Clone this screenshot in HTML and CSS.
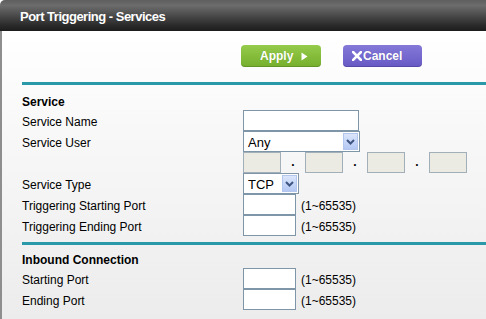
FILE: index.html
```html
<!DOCTYPE html>
<html>
<head>
<meta charset="utf-8">
<title>Port Triggering - Services</title>
<link rel="stylesheet" href="styles.css">
</head>
<body>
<div class="page">
  <div class="header"><h1 class="title">Port Triggering - Services</h1></div>
  <div class="main">
    <div class="actions">
      <button class="btn btn-apply"><span>Apply</span><svg class="tri" width="7" height="9" viewBox="0 0 7 9"><path d="M0.5 0.5 L6.5 4.5 L0.5 8.5 Z" fill="#fff"/></svg></button>
      <button class="btn btn-cancel"><svg class="xicon" width="10" height="10" viewBox="0 0 10 10"><path d="M1 1 L9 9 M9 1 L1 9" stroke="#fff" stroke-width="2.6" stroke-linecap="square"/></svg><span>Cancel</span></button>
    </div>
    <div class="rule rule-top"></div>
    <div class="section">
      <div class="heading">Service</div>
      <div class="row">
        <div class="label">Service Name</div>
        <div class="field"><input class="text w-name" type="text"></div>
      </div>
      <div class="row">
        <div class="label">Service User</div>
        <div class="field">
          <div class="select w-user"><span class="sel-text">Any</span><span class="sel-arrow"><svg width="9" height="6" viewBox="0 0 9 6"><path d="M1 1 L4.5 4.5 L8 1" fill="none" stroke="#3f5683" stroke-width="2"/></svg></span></div>
        </div>
      </div>
      <div class="row">
        <div class="label"></div>
        <div class="field">
          <input class="text ip" type="text" disabled><span class="dot">.</span><input class="text ip" type="text" disabled><span class="dot">.</span><input class="text ip" type="text" disabled><span class="dot">.</span><input class="text ip" type="text" disabled>
        </div>
      </div>
      <div class="row">
        <div class="label">Service Type</div>
        <div class="field">
          <div class="select w-type"><span class="sel-text">TCP</span><span class="sel-arrow"><svg width="9" height="6" viewBox="0 0 9 6"><path d="M1 1 L4.5 4.5 L8 1" fill="none" stroke="#3f5683" stroke-width="2"/></svg></span></div>
        </div>
      </div>
      <div class="row">
        <div class="label">Triggering Starting Port</div>
        <div class="field"><input class="text w-port" type="text"><span class="hint">(1~65535)</span></div>
      </div>
      <div class="row">
        <div class="label">Triggering Ending Port</div>
        <div class="field"><input class="text w-port" type="text"><span class="hint">(1~65535)</span></div>
      </div>
    </div>
    <div class="rule rule-mid"></div>
    <div class="section">
      <div class="heading heading-inbound">Inbound Connection</div>
      <div class="row">
        <div class="label">Starting Port</div>
        <div class="field"><input class="text w-port" type="text"><span class="hint">(1~65535)</span></div>
      </div>
      <div class="row">
        <div class="label">Ending Port</div>
        <div class="field"><input class="text w-port" type="text"><span class="hint">(1~65535)</span></div>
      </div>
    </div>
  </div>
</div>
</body>
</html>
```

FILE: styles.css
```css
html, body {
  margin: 0;
  padding: 0;
}

body {
  font-family: "Liberation Sans", Arial, sans-serif;
  font-size: 12px;
  color: #000;
  background: #fff;
}

.page {
  width: 486px;
  height: 319px;
  overflow: hidden;
  display: flex;
  flex-direction: column;
}

.header {
  flex: 0 0 31px;
  box-sizing: border-box;
  padding-left: 20px;
  display: flex;
  align-items: center;
  border-top-left-radius: 5px;
  background: linear-gradient(#5e5e5e 0%, #6c6c6c 18%, #4a4a4a 50%, #2c2c2c 80%, #1c1c1c 100%);
}

.title {
  margin: 0;
  color: #fff;
  font-size: 13px;
  font-weight: bold;
  letter-spacing: -0.5px;
  line-height: 15px;
  padding-top: 1px;
}

.main {
  flex: 1;
  border-left: 2px solid #8e8e8e;
  padding-left: 20px;
  background: linear-gradient(#ffffff 0%, #f8f8f8 35%, #ececec 100%);
}

.actions {
  display: flex;
  gap: 22px;
  padding-left: 219px;
  margin-top: 14px;
}

.btn {
  box-sizing: border-box;
  height: 22px;
  margin: 0;
  padding: 0;
  border: 0;
  border-radius: 4px;
  color: #fff;
  font-family: "Liberation Sans", Arial, sans-serif;
  font-size: 12px;
  font-weight: bold;
  display: flex;
  align-items: center;
  text-shadow: 0 0 1px rgba(0, 0, 0, 0.15);
}

.btn-apply {
  width: 80px;
  padding-left: 19px;
  gap: 8px;
  background: linear-gradient(#96cb4c 0%, #85bd3b 50%, #76ae2e 100%);
  box-shadow: inset 0 -1px 0 rgba(60, 100, 20, 0.35);
}

.btn-cancel {
  width: 79px;
  padding-left: 9px;
  gap: 1px;
  background: linear-gradient(#8479d8 0%, #7669cf 50%, #6759c3 100%);
  box-shadow: inset 0 -1px 0 rgba(50, 40, 120, 0.35);
}

.tri {
  display: block;
  margin-top: 1px;
}

.xicon {
  display: block;
}

.rule {
  height: 3px;
  background: #2a9aab;
}

.rule-top {
  margin-top: 15px;
}

.rule-mid {
  margin-top: 6px;
}

.section {
  display: flex;
  flex-direction: column;
}

.heading {
  box-sizing: border-box;
  height: 20px;
  padding-top: 5px;
  line-height: 14px;
  font-weight: bold;
  margin-top: 5px;
}

.heading-inbound {
  margin-top: 3px;
}

.row {
  display: grid;
  grid-template-columns: 221px auto;
  height: 21px;
}

.label {
  padding-top: 5px;
  line-height: 14px;
  white-space: nowrap;
}

.field {
  display: flex;
  align-items: flex-start;
}

.text {
  box-sizing: border-box;
  height: 21px;
  margin: 0;
  padding: 0 3px;
  border: 1px solid #7f96a8;
  background: #fff;
  font-family: "Liberation Sans", Arial, sans-serif;
  font-size: 13px;
  outline: none;
}

.w-name {
  width: 116px;
}

.w-port {
  width: 53px;
}

.ip {
  width: 38px;
  background: #ebebe4;
  border-color: #a3afb8;
}

.dot {
  width: 24px;
  text-align: center;
  padding-top: 3px;
  line-height: 14px;
  font-weight: bold;
  color: #000;
}

.hint {
  margin-left: 5px;
  padding-top: 5px;
  line-height: 14px;
}

.select {
  box-sizing: border-box;
  height: 21px;
  border: 1px solid #7f96a8;
  background: #fff;
  display: flex;
  align-items: flex-start;
  justify-content: space-between;
}

.w-user {
  width: 117px;
}

.w-type {
  width: 56px;
}

.sel-text {
  font-size: 13px;
  line-height: 15px;
  padding-top: 3px;
  padding-left: 4px;
}

.sel-arrow {
  box-sizing: border-box;
  width: 15px;
  height: 17px;
  margin: 1px;
  border: 1px solid #b3c6ee;
  background: linear-gradient(#dce6fb 0%, #c3d4f7 60%, #b4c8f3 100%);
  display: flex;
  align-items: center;
  justify-content: center;
}

.sel-arrow svg {
  display: block;
}
```
